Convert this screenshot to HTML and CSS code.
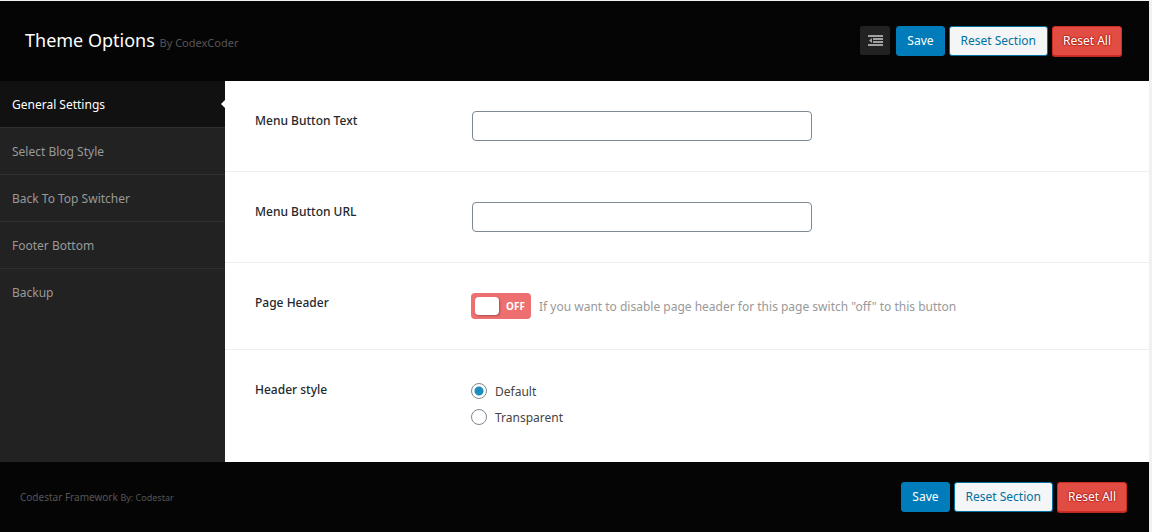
FILE: index.html
```html
<!DOCTYPE html>
<html lang="en">
<head>
  <meta charset="utf-8">
  <title>Theme Options</title>
  <link rel="stylesheet" href="styles.css">
</head>

<body>

<form class="options">

  <header class="options-header">
    <h1 class="title">Theme Options <small>By CodexCoder</small></h1>
    <div class="buttons">
      <button type="button" class="expand" aria-label="Show all options">
        <svg width="15" height="11" viewBox="0 0 15 11" fill="#a0a0a0">
          <path d="M0 0h15v2H0zM5 3h10v2H5zM5 6h10v2H5zM0 9h15v2H0zM4 3v5L1 5.5z"/>
        </svg>
      </button>
      <button type="submit" class="button primary">Save</button>
      <button type="button" class="button secondary">Reset Section</button>
      <button type="reset" class="button warning">Reset All</button>
    </div>
  </header>

  <div class="wrapper">
    <nav class="nav">
      <a class="nav-link active" href="#general">General Settings</a>
      <a class="nav-link" href="#blog">Select Blog Style</a>
      <a class="nav-link" href="#top">Back To Top Switcher</a>
      <a class="nav-link" href="#footer">Footer Bottom</a>
      <a class="nav-link" href="#backup">Backup</a>
    </nav>

    <main class="content" id="general">
      <div class="field">
        <label class="field-title" for="menu-text">Menu Button Text</label>
        <input class="text-input" type="text" id="menu-text">
      </div>

      <div class="field">
        <label class="field-title" for="menu-url">Menu Button URL</label>
        <input class="text-input" type="text" id="menu-url">
      </div>

      <div class="field">
        <label class="field-title" for="page-header">Page Header</label>
        <div class="switch-row">
          <label class="switch">
            <input class="switch-input" type="checkbox" id="page-header">
            <span class="ball"></span>
            <span class="off">OFF</span>
          </label>
          <span class="desc">If you want to disable page header for this page switch "off" to this button</span>
        </div>
      </div>

      <div class="field" role="radiogroup" aria-labelledby="style-title">
        <div class="field-title" id="style-title">Header style</div>
        <div class="radios">
          <label class="radio"><input type="radio" name="header-style" checked>Default</label>
          <label class="radio"><input type="radio" name="header-style">Transparent</label>
        </div>
      </div>
    </main>
  </div>

  <footer class="options-footer">
    <div class="copyright">Codestar Framework <small>By: Codestar</small></div>
    <div class="buttons">
      <button type="submit" class="button primary">Save</button>
      <button type="button" class="button secondary">Reset Section</button>
      <button type="reset" class="button warning">Reset All</button>
    </div>
  </footer>

</form>

</body>
</html>
```
FILE: styles.css
```css
* {
  box-sizing: border-box;
}

body {
  margin: 0;
  background-color: #f1f1f1;
  color: #444;
  font-family: "Segoe UI", "Noto Sans", "Open Sans", sans-serif;
  font-size: 12px;
  line-height: 20px;
}

.options {
  margin: 1px 3px 0 0;
}

/* header and footer bars */

.options-header,
.options-footer {
  display: flex;
  justify-content: space-between;
  align-items: center;
  background-color: #050505;
}

.options-header {
  height: 80px;
  padding: 0 27px 0 25px;
}

.options-footer {
  height: 70px;
  padding: 0 22px 0 20px;
}

.title {
  margin: 0;
  color: #fff;
  font-size: 18px;
  font-weight: 400;
}

.title small {
  color: #555;
  font-size: 11px;
}

.copyright {
  color: #555;
  font-size: 10px;
}

.copyright small {
  font-size: 9px;
}

.buttons {
  display: flex;
  gap: 4px;
}

.button {
  height: 30px;
  padding: 0 10px;
  border: 1px solid;
  border-radius: 3px;
  font: inherit;
}

.primary {
  background-color: #007cba;
  border-color: #007cba;
  color: #fff;
}

.secondary {
  padding: 0 11px;
  background-color: #f3f5f6;
  border-color: #0071a1;
  color: #0071a1;
}

.warning {
  background-color: #e14d43;
  border-color: #d02c21;
  box-shadow: 0 1px 0 #ba281e;
  color: #fff;
  text-shadow: 0 -1px 1px #ba281e, 1px 0 1px #ba281e, 0 1px 1px #ba281e, -1px 0 1px #ba281e;
}

.expand {
  display: flex;
  justify-content: center;
  align-items: center;
  width: 30px;
  height: 29px;
  margin-right: 2px;
  padding: 0;
  border: 0;
  border-radius: 2px;
  background-color: #222;
}

/* sidebar */

.wrapper {
  display: flex;
}

.nav {
  width: 225px;
  flex-shrink: 0;
  background-color: #222;
}

.nav-link {
  display: block;
  position: relative;
  padding: 14px 12px 12px;
  border-bottom: 1px solid #2f2f2f;
  color: #999;
  text-decoration: none;
}

.nav-link:last-child {
  border-bottom: 0;
}

.nav-link.active {
  background-color: #111;
  color: #fff;
}

.nav-link.active::after {
  content: "";
  position: absolute;
  top: 50%;
  right: 0;
  margin-top: -4px;
  border: 4px solid transparent;
  border-left: 0;
  border-right-color: #fff;
}

/* fields */

.content {
  flex: 1;
  background-color: #fff;
}

.field {
  display: flex;
  padding: 30px;
  border-bottom: 1px solid #eee;
}

.field:last-child {
  border-bottom: 0;
}

.field-title {
  width: 216px;
  flex-shrink: 0;
  color: #23282d;
  font-weight: 500;
}

.text-input {
  width: 340px;
  height: 30px;
  margin: 0 1px;
  padding: 0 8px;
  border: 1px solid #7e8993;
  border-radius: 4px;
  font: inherit;
}

.switch-row {
  display: flex;
  align-items: center;
  gap: 8px;
}

.switch {
  display: flex;
  align-items: center;
  position: relative;
  width: 60px;
  height: 26px;
  padding: 0 6px 0 4px;
  justify-content: space-between;
  border-radius: 4px;
  background-color: #ed6f6f;
  color: #fff;
  font-size: 10px;
  font-weight: 700;
}

.switch-input {
  position: absolute;
  opacity: 0;
}

.ball {
  width: 24px;
  height: 18px;
  border-radius: 4px;
  background-color: #fff;
  box-shadow: 1px 1px 2px rgba(0, 0, 0, 0.3);
}

.desc {
  padding-top: 2px;
  color: #999;
}

.radio {
  display: flex;
  gap: 8px;
  padding-bottom: 2px;
  line-height: 24px;
}

.radio input {
  appearance: none;
  width: 16px;
  height: 16px;
  margin: 3px 0 0;
  border: 1px solid #7e8993;
  border-radius: 50%;
  background-color: #fff;
}

.radio input:checked {
  background-image: radial-gradient(circle, #1e8cbe 4px, transparent 5px);
}
```
